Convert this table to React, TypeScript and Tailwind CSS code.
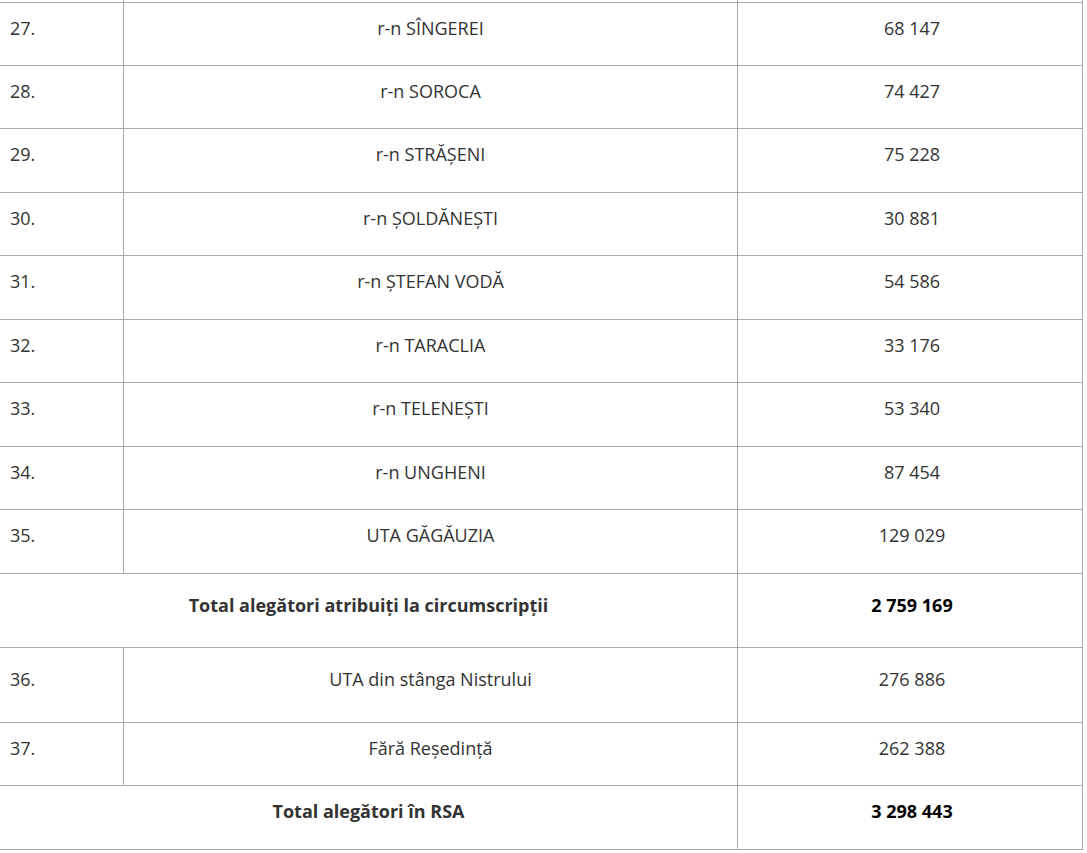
import type React from "react";

interface Row {
  nr: string;
  name: string;
  voters: string;
  h: string;
}

const districts: Row[] = [
  { nr: "27.", name: "r-n SÎNGEREI", voters: "68 147", h: "h-[63px]" },
  { nr: "28.", name: "r-n SOROCA", voters: "74 427", h: "h-[63px]" },
  { nr: "29.", name: "r-n STRĂȘENI", voters: "75 228", h: "h-[64px]" },
  { nr: "30.", name: "r-n ȘOLDĂNEȘTI", voters: "30 881", h: "h-[63px]" },
  { nr: "31.", name: "r-n ȘTEFAN VODĂ", voters: "54 586", h: "h-[64px]" },
  { nr: "32.", name: "r-n TARACLIA", voters: "33 176", h: "h-[63px]" },
  { nr: "33.", name: "r-n TELENEȘTI", voters: "53 340", h: "h-[64px]" },
  { nr: "34.", name: "r-n UNGHENI", voters: "87 454", h: "h-[63px]" },
  { nr: "35.", name: "UTA GĂGĂUZIA", voters: "129 029", h: "h-[64px]" },
];

const cell = "border border-[#ababab] align-top";

const DataRow: React.FC<{ row: Row; pt?: string }> = ({ row, pt = "pt-[12px]" }) => (
  <tr className={row.h}>
    <td className={`${cell} ${pt} pl-[10px] w-[124px]`}>{row.nr}</td>
    <td className={`${cell} ${pt} text-center w-[614px]`}>{row.name}</td>
    <td className={`${cell} ${pt} pl-[4px] text-center`}>{row.voters}</td>
  </tr>
);

const TotalRow: React.FC<{ label: string; value: string; h: string; pt: string }> = ({
  label,
  value,
  h,
  pt,
}) => (
  <tr className={h}>
    <td colSpan={2} className={`${cell} ${pt} text-center font-bold`}>
      {label}
    </td>
    <td className={`${cell} ${pt} pl-[4px] text-center font-bold text-black`}>{value}</td>
  </tr>
);

export default function App() {
  return (
    <div className="w-[1087px] h-[853px] overflow-hidden bg-white">
      <table
        className="-mt-[61px] -ml-[1px] w-[1084px] border-collapse table-fixed text-[18px] leading-[27px] text-[#333]"
        style={{ fontFamily: '"Open Sans", "Noto Sans", sans-serif' }}
      >
        <tbody>
          {/* previous row, only its bottom edge shows */}
          <tr className="h-[63px]">
            <td className={`${cell} w-[124px]`} />
            <td className={`${cell} w-[614px]`} />
            <td className={cell} />
          </tr>
          {districts.map((row) => (
            <DataRow key={row.nr} row={row} />
          ))}
          <TotalRow
            label="Total alegători atribuiți la circumscripții"
            value="2 759 169"
            h="h-[74px]"
            pt="pt-[18px]"
          />
          <DataRow
            row={{ nr: "36.", name: "UTA din stânga Nistrului", voters: "276 886", h: "h-[75px]" }}
            pt="pt-[18px]"
          />
          <DataRow
            row={{ nr: "37.", name: "Fără Reședință", voters: "262 388", h: "h-[63px]" }}
          />
          <TotalRow label="Total alegători în RSA" value="3 298 443" h="h-[64px]" pt="pt-[12px]" />
        </tbody>
      </table>
    </div>
  );
}
